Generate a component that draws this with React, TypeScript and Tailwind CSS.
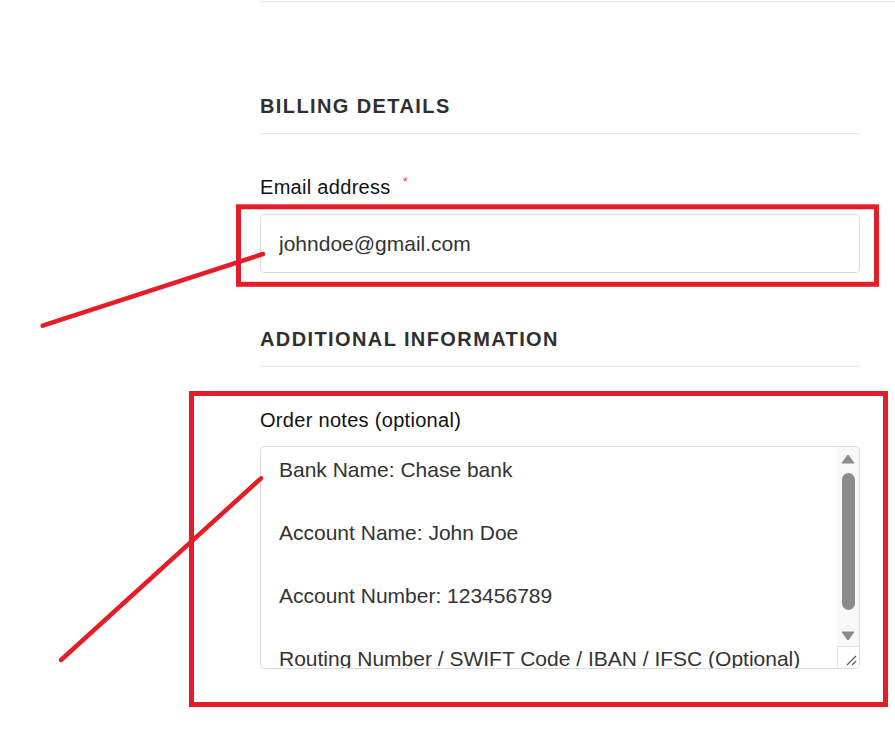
import React from "react";

const notes = [
  "Bank Name: Chase bank",
  "",
  "Account Name: John Doe",
  "",
  "Account Number: 123456789",
  "",
  "Routing Number / SWIFT Code / IBAN / IFSC (Optional)",
];

function SectionTitle({ children }: { children: React.ReactNode }) {
  return (
    <>
      <h3 className="text-[20px] font-bold leading-[24px] tracking-[1.4px] text-[#2f2f2f]">
        {children}
      </h3>
      <div className="mt-[15px] h-px bg-[#e6e6e6]" />
    </>
  );
}

function FieldLabel({ children, required }: { children: React.ReactNode; required?: boolean }) {
  return (
    <label className="mt-[41px] block h-[24px] text-[20px] leading-[24px] tracking-[0.3px] text-[#111]">
      {children}
      {required ? (
        <span className="relative -top-[8px] ml-[12px] text-[13px] leading-none text-[#d9534f]">*</span>
      ) : null}
    </label>
  );
}

function Triangle({ up }: { up?: boolean }) {
  return (
    <svg width="14" height="10" viewBox="0 0 14 10" className="mx-auto block">
      <path d={up ? "M7 1 L13 9 L1 9 Z" : "M1 1 L13 1 L7 9 Z"} fill="#8a8a8a" strokeLinejoin="round" stroke="#8a8a8a" strokeWidth="1" />
    </svg>
  );
}

function Scrollbar() {
  return (
    <div className="flex w-[22px] shrink-0 flex-col bg-[#f8f8f8]">
      <div className="pt-[7px]">
        <Triangle up />
      </div>
      <div className="mx-auto mt-[9px] h-[137px] w-[13px] rounded-full bg-[#8b8b8b]" />
      <div className="mt-[21px]">
        <Triangle />
      </div>
      <div className="mt-auto flex h-[22px] items-end justify-end border-l border-t border-[#e2e2e2] bg-white pb-[2px] pr-[2px]">
        <svg width="12" height="12" viewBox="0 0 12 12">
          <path d="M2 11 L11 2 M7 11 L11 7" stroke="#555" strokeWidth="1.2" />
        </svg>
      </div>
    </div>
  );
}

export default function App() {
  return (
    <div className="relative h-[748px] w-full overflow-hidden bg-white font-['Liberation_Sans',Arial,sans-serif]">
      <div className="mt-px h-px w-[635px] translate-x-[260px] bg-[#e6e6e6]" />

      <div className="ml-[260px] w-[600px] pt-[92px]">
        <SectionTitle>BILLING DETAILS</SectionTitle>

        <FieldLabel required>Email address</FieldLabel>
        <input
          readOnly
          value="johndoe@gmail.com"
          className="mt-[15px] block h-[59px] w-full rounded-[4px] border border-[#dcdcdc] bg-white px-[18px] text-[21px] text-[#333] outline-none"
        />

        <div className="mt-[54px]">
          <SectionTitle>ADDITIONAL INFORMATION</SectionTitle>
        </div>

        <FieldLabel>Order notes (optional)</FieldLabel>
        <div className="mt-[14px] flex h-[223px] overflow-hidden rounded-[4px] border border-[#dcdcdc] bg-white">
          <div className="flex-1 overflow-hidden pl-[18px] pt-[7px] text-[21px] leading-[31.5px] text-[#333]">
            {notes.map((line, i) => (
              <div key={i} className="h-[31.5px] whitespace-nowrap">
                {line}
              </div>
            ))}
          </div>
          <Scrollbar />
        </div>
      </div>

      {/* annotation marks drawn over the page */}
      <svg className="pointer-events-none absolute inset-0" width="895" height="748" viewBox="0 0 895 748">
        <g fill="none" stroke="#e31e28" strokeWidth="5">
          <rect x="238.5" y="206.8" width="638" height="77.5" />
          <rect x="191.5" y="393.5" width="694" height="311" />
        </g>
        <g stroke="#e31e28" strokeWidth="4.5" strokeLinecap="round">
          <line x1="42.7" y1="325.7" x2="263" y2="254" />
          <line x1="61" y1="660" x2="261" y2="478.3" />
        </g>
      </svg>
    </div>
  );
}
